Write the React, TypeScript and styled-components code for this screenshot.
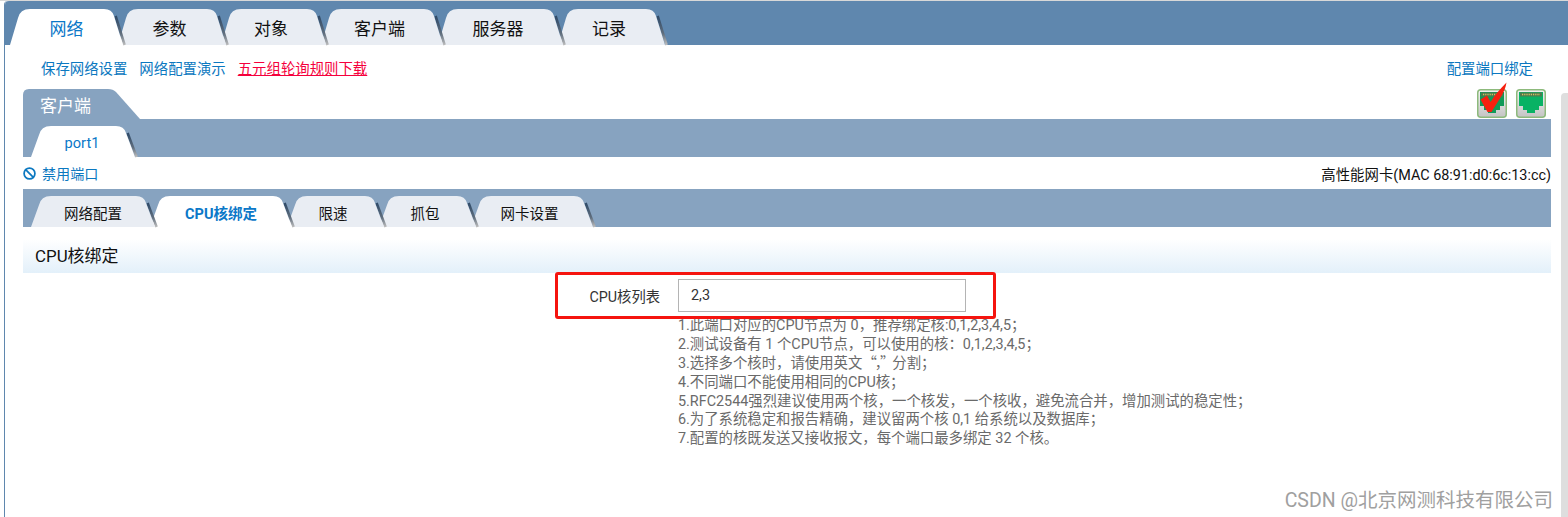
import React, { useId } from "react";
import styled, { createGlobalStyle } from "styled-components";
import { Ban } from "lucide-react";

const FONT = `Roboto, "Noto Sans CJK SC", sans-serif`;

const Global = createGlobalStyle`
  html, body { margin: 0; padding: 0; background: #fff; }
  body { width: 1568px; height: 517px; overflow: hidden; font-family: ${FONT}; }
`;

const Page = styled.div`
  position: relative;
  width: 1568px;
  height: 517px;
  box-sizing: border-box;
  padding: 1px 0 0 4px;
  background: linear-gradient(#d8d8d8 0 1px, #fff 1px);
  overflow: hidden;
`;
const Shell = styled.div`
  height: 516px;
  border-left: 1px solid #5f87ae;
  border-top-left-radius: 4px;
  background: #fff;
  display: flex;
  flex-direction: column;
`;
const TopBar = styled.div`
  height: 44px;
  flex: none;
  background: #5f87ae;
  border-top-left-radius: 4px;
  padding-left: 5px;
  display: flex;
  align-items: flex-end;
`;
const TabRow = styled.div`
  display: flex;
  align-items: flex-end;
`;
const TabItem = styled.div<{ $w: number; $h: number; $z: number; $first: boolean; $shift: number; $drop: number }>`
  position: relative;
  z-index: ${(p) => p.$z};
  width: ${(p) => p.$w}px;
  height: ${(p) => p.$h}px;
  margin-left: ${(p) => (p.$first ? 0 : -5)}px;
  box-sizing: border-box;
  padding: ${(p) => p.$drop}px ${(p) => p.$shift}px 0 0;
  display: flex;
  align-items: center;
  justify-content: center;
  flex: none;
`;
const TabShape = styled.svg`
  position: absolute;
  left: 0;
  top: 0;
  overflow: visible;
`;
const TabText = styled.span<{ $size: number; $active: boolean; $bold: boolean }>`
  position: relative;
  font-size: ${(p) => p.$size}px;
  color: ${(p) => (p.$active ? "#0b78c8" : "#111")};
  font-weight: ${(p) => (p.$bold ? 700 : 400)};
  white-space: nowrap;
`;

function Tab(props: {
  w: number; h: number; z: number; label: string; size: number;
  active?: boolean; first?: boolean; bold?: boolean; shift?: number; drop?: number;
}) {
  const { w, h, z, label, size, active = false, first = false, bold = false, shift, drop = 0 } = props;
  const id = useId();
  const s = 11;
  const fill = `M0 ${h} L${s - 3} 9 Q${s - 1} 0 ${s + 9} 0 H${w - s - 8} Q${w - s} 0 ${w - s + 2} 7 L${w} ${h} Z`;
  const edge = `M${w - s + 2} 7 L${w} ${h}`;
  return (
    <TabItem $w={w} $h={h} $z={z} $first={first} $shift={shift ?? (active ? 0 : 5)} $drop={drop}>
      <TabShape width={w} height={h} viewBox={`0 0 ${w} ${h}`}>
        <defs>
          <linearGradient id={id} x1="0" y1="0" x2="0" y2="1">
            <stop offset="0" stopColor="#2f4a68" />
            <stop offset="0.6" stopColor="#5f6d7c" />
            <stop offset="1" stopColor="#bdbdbd" />
          </linearGradient>
        </defs>
        <path d={edge} transform="translate(1.6 0)" stroke={`url(#${id})`} strokeWidth="2.6" fill="none" />
        <path d={fill} fill={active ? "#fff" : "#e9edf3"} />
      </TabShape>
      <TabText $size={size} $active={active} $bold={bold}>{label}</TabText>
    </TabItem>
  );
}

const Body = styled.div`
  padding: 0 17px 0 18px;
  display: flex;
  flex-direction: column;
`;
const LinkBar = styled.div`
  height: 44px;
  padding: 1px 18px 0;
  box-sizing: border-box;
  display: flex;
  align-items: center;
  font-size: 14.4px;
`;
const LinkA = styled.a<{ $hot?: boolean }>`
  color: ${(p) => (p.$hot ? "#f5003c" : "#0b78c0")};
  text-decoration: ${(p) => (p.$hot ? "underline" : "none")};
  margin-right: 12px;
  white-space: nowrap;
`;
const LinkEnd = styled(LinkA)`
  margin: 0 0 0 auto;
`;
const PanelHead = styled.div`
  height: 30px;
  display: flex;
  align-items: flex-end;
`;
const PanelTitle = styled.div`
  width: 117px;
  height: 30px;
  background: #87a3c0;
  color: #fff;
  font-size: 17px;
  line-height: 35px;
  padding-left: 17px;
  box-sizing: border-box;
  clip-path: path("M0 30 V6 Q0 0 6 0 H85 Q90 0 93 3 L117 30 Z");
`;
const IconGroup = styled.div`
  margin-left: auto;
  padding: 0 5px 1px 0;
  display: flex;
  gap: 9px;
`;
const PortSvg = styled.svg`
  display: block;
  overflow: visible;
`;
function PortIcon({ checked }: { checked?: boolean }) {
  const id = useId();
  return (
    <PortSvg width="30" height="29" viewBox="0 0 30 29">
      <defs>
        <linearGradient id={id} x1="0" y1="0" x2="0" y2="1">
          <stop offset="0" stopColor="#f2f2f2" />
          <stop offset="1" stopColor="#c4c4c4" />
        </linearGradient>
      </defs>
      <rect x="0.75" y="0.75" width="28.5" height="27.5" rx="3" fill={`url(#${id})`} stroke="#8dba7c" strokeWidth="1.5" />
      <path d="M3 3H27V17H23V21H19V24H11V21H7V17H3Z" fill={checked ? "#0f9a58" : "#08b264"} />
      <rect x="4" y="3.5" width="22" height="4" fill="#4d7c4e" />
      <line x1="6" y1="5.5" x2="24" y2="5.5" stroke="#d8c060" strokeWidth="1.5" strokeDasharray="1.2 1" />
      {checked && (
        <path
          d="M3.5 10.5 L10 6.5 L13.6 13 C17 7 23 0 29.5 -6.5 C28 4 21 12 14.5 23 L10.5 23 Z"
          fill="#f5200f"
        />
      )}
    </PortSvg>
  );
}
const Band = styled.div<{ $h: number }>`
  height: ${(p) => p.$h}px;
  background: #87a3c0;
  display: flex;
  align-items: flex-end;
  padding-left: 8px;
`;
const StatusRow = styled.div`
  height: 32px;
  display: flex;
  align-items: center;
  justify-content: space-between;
  font-size: 14.4px;
  color: #111;
`;
const BanLink = styled.a`
  display: flex;
  align-items: center;
  gap: 6px;
  color: #0b78c0;
  font-size: 14.1px;
`;
const SectionTitle = styled.div`
  margin-top: 12px;
  height: 34px;
  padding-left: 12px;
  background: linear-gradient(#fff, #e3f0fa);
  font-size: 16.9px;
  line-height: 35px;
  color: #111;
`;
const FormArea = styled.div`
  position: relative;
  padding-top: 6px;
`;
const FormRow = styled.div`
  display: grid;
  grid-template-columns: 637px 288px;
  column-gap: 18px;
  align-items: center;
`;
const FieldLabel = styled.label`
  text-align: right;
  font-size: 14.3px;
  color: #333;
`;
const FieldInput = styled.input`
  box-sizing: border-box;
  width: 288px;
  height: 33px;
  border: 1px solid #b4b4b4;
  padding: 0 12px;
  font-family: ${FONT};
  font-size: 14.4px;
  color: #333;
  outline: none;
`;
const Highlight = styled.div`
  position: absolute;
  left: 532px;
  top: -1px;
  width: 441px;
  height: 47px;
  box-sizing: border-box;
  border: 3px solid #f5140f;
  border-radius: 3px;
  pointer-events: none;
`;
const Hints = styled.div`
  margin: 5px 0 0 655px;
  font-size: 14.38px;
  line-height: 18.9px;
  color: #6a6a6a;
  white-space: nowrap;
`;
const HintLine = styled.div`
  height: 18.9px;
`;
const Quote = styled.span`
  font-family: "Noto Sans CJK SC", sans-serif;
  line-height: 0;
  letter-spacing: -2px;
`;
const Scrollbar = styled.div`
  position: absolute;
  right: 0;
  top: 93px;
  bottom: 0;
  width: 7px;
  background: #dedede;
  border-top-left-radius: 4px;
`;
const Watermark = styled.div`
  position: absolute;
  right: 15px;
  top: 484px;
  font-size: 19.5px;
  color: #a0a0a0;
  text-shadow: 0 0 2px #fff;
  white-space: nowrap;
`;

const TOP_TABS: [string, number][] = [
  ["网络", 113], ["参数", 108], ["对象", 105], ["客户端", 122], ["服务器", 125], ["记录", 107],
];
const INNER_TABS: [string, number][] = [
  ["网络配置", 124], ["CPU核绑定", 142], ["限速", 97], ["抓包", 97], ["网卡设置", 122],
];
const HINTS: React.ReactNode[] = [
  "1.此端口对应的CPU节点为 0，推荐绑定核:0,1,2,3,4,5；",
  "2.测试设备有 1 个CPU节点，可以使用的核：0,1,2,3,4,5；",
  <>3.选择多个核时，请使用英文<Quote>“，”</Quote>分割；</>,
  "4.不同端口不能使用相同的CPU核；",
  "5.RFC2544强烈建议使用两个核，一个核发，一个核收，避免流合并，增加测试的稳定性；",
  "6.为了系统稳定和报告精确，建议留两个核 0,1 给系统以及数据库；",
  "7.配置的核既发送又接收报文，每个端口最多绑定 32 个核。",
];

export default function App() {
  return (
    <Page>
      <Global />
      <Shell>
        <TopBar>
          <TabRow>
            {TOP_TABS.map(([label, w], i) => (
              <Tab key={label} label={label} w={w} h={36} z={10 - i} size={17} first={i === 0} active={i === 0} />
            ))}
          </TabRow>
        </TopBar>
        <Body>
          <LinkBar>
            <LinkA>保存网络设置</LinkA>
            <LinkA>网络配置演示</LinkA>
            <LinkA $hot>五元组轮询规则下载</LinkA>
            <LinkEnd>配置端口绑定</LinkEnd>
          </LinkBar>
          <PanelHead>
            <PanelTitle>客户端</PanelTitle>
            <IconGroup>
              <PortIcon checked />
              <PortIcon />
            </IconGroup>
          </PanelHead>
          <Band $h={38}>
            <TabRow>
              <Tab label="port1" w={104} h={31} z={5} size={14.6} first active drop={2} shift={2} />
            </TabRow>
          </Band>
          <StatusRow>
            <BanLink>
              <Ban size={13} strokeWidth={3.2} />
              禁用端口
            </BanLink>
            <span>高性能网卡(MAC 68:91:d0:6c:13:cc)</span>
          </StatusRow>
          <Band $h={38}>
            <TabRow>
              {INNER_TABS.map(([label, w], i) => (
                <Tab
                  key={label}
                  label={label}
                  w={w}
                  h={31}
                  z={10 - i}
                  size={14.5}
                  first={i === 0}
                  active={i === 1}
                  bold={i === 1}
                  shift={i === 0 ? 0 : undefined}
                  drop={2}
                />
              ))}
            </TabRow>
          </Band>
          <SectionTitle>CPU核绑定</SectionTitle>
          <FormArea>
            <FormRow>
              <FieldLabel>CPU核列表</FieldLabel>
              <FieldInput defaultValue="2,3" />
            </FormRow>
            <Highlight />
            <Hints>
              {HINTS.map((h, i) => (
                <HintLine key={i}>{h}</HintLine>
              ))}
            </Hints>
          </FormArea>
        </Body>
      </Shell>
      <Scrollbar />
      <Watermark>CSDN @北京网测科技有限公司</Watermark>
    </Page>
  );
}
